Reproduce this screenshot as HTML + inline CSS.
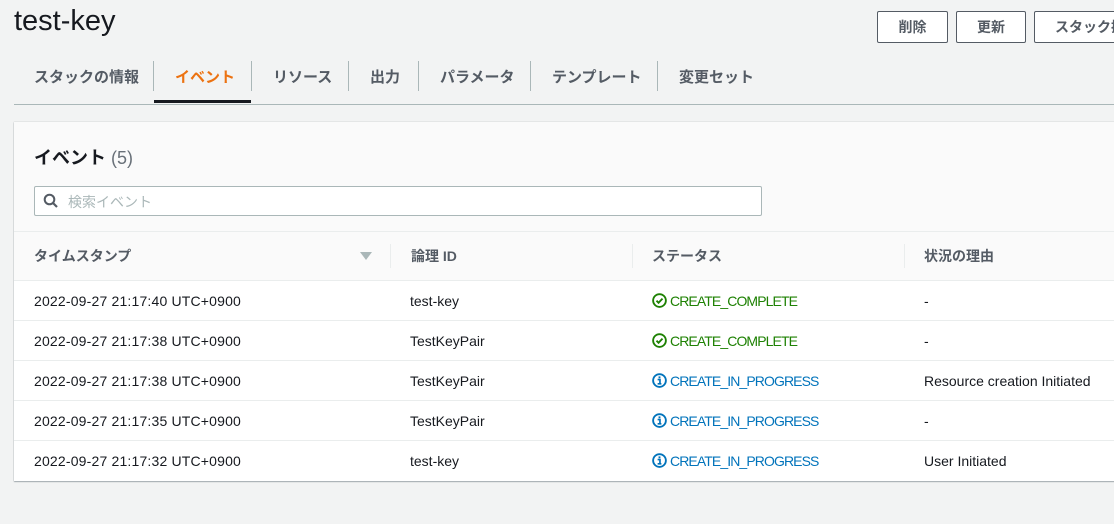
<!DOCTYPE html>
<html><head><meta charset="utf-8"><style>
*{box-sizing:border-box;margin:0;padding:0}
body{width:1114px;height:524px;overflow:hidden;background:#f2f3f3;font-family:"Liberation Sans","Noto Sans CJK JP",sans-serif;color:#16191f;position:relative}
.a{position:absolute;white-space:nowrap}
h1{position:absolute;left:14px;top:5px;font-size:29px;font-weight:normal;color:#16191f}
.btn{position:absolute;top:11px;height:32px;border:1px solid #545b64;border-radius:2px;background:#fff;font-size:14px;font-weight:bold;color:#545b64;line-height:30px;text-align:center;white-space:nowrap;overflow:hidden}
.tab{position:absolute;top:66px;font-size:15px;font-weight:bold;color:#545b64;white-space:nowrap}
.sep{position:absolute;top:61px;width:1px;height:30px;background:#aab7b8}
.panel{position:absolute;left:14px;top:122px;width:1110px;height:359px;background:#fff;box-shadow:0 1px 1px rgba(0,28,36,.3),0 0 1px rgba(0,28,36,.3)}
.row{position:absolute;left:0;width:1110px;height:40px;border-top:1px solid #eaeded;font-size:14px}
.row span{position:absolute;top:12px;white-space:nowrap}
.row span.t{letter-spacing:0.18px}
.st{color:#0073bb;letter-spacing:-0.9px}.ok{color:#1d8102;letter-spacing:-0.9px}
.st svg,.ok svg{margin-right:3px}
</style></head><body>
<h1>test-key</h1>
<div class="btn" style="left:877px;width:71px">削除</div>
<div class="btn" style="left:956px;width:70px">更新</div>
<div class="btn" style="left:1034px;width:100px;text-align:left;padding-left:20px">スタック操作</div>
<div class="tab" style="left:34px">スタックの情報</div>
<div class="sep" style="left:153px"></div>
<div class="tab" style="left:175px;color:#ec7211">イベント</div>
<div class="a" style="left:154px;top:100px;width:97px;height:3px;background:#16191f"></div>
<div class="sep" style="left:251px"></div>
<div class="tab" style="left:273px">リソース</div>
<div class="sep" style="left:348px"></div>
<div class="tab" style="left:370px">出力</div>
<div class="sep" style="left:418px"></div>
<div class="tab" style="left:440px">パラメータ</div>
<div class="sep" style="left:530px"></div>
<div class="tab" style="left:552px">テンプレート</div>
<div class="sep" style="left:657px"></div>
<div class="tab" style="left:679px">変更セット</div>
<div class="a" style="left:14px;top:104px;width:1100px;height:1px;background:#aab7b8"></div>
<div class="panel">
 <div class="a" style="left:0;top:0;width:1110px;height:158px;background:#fafafa"></div>
 <div class="a" style="left:20px;top:22px;font-size:18px;font-weight:bold">イベント <span style="font-weight:normal;color:#687078">(5)</span></div>
 <div class="a" style="left:20px;top:64px;width:728px;height:30px;border:1px solid #aab7b8;border-radius:2px;background:#fff"></div>
 <svg class="a" style="left:29px;top:71px" width="16" height="16" viewBox="0 0 16 16"><circle cx="6.5" cy="6.5" r="4.8" fill="none" stroke="#545b64" stroke-width="2"/><path d="M10 10l4 4" stroke="#545b64" stroke-width="2.2"/></svg>
 <div class="a" style="left:54px;top:70px;font-size:14px;color:#aab7b8">検索イベント</div>
 <div class="a" style="left:0;top:109px;width:1110px;height:1px;background:#eaeded"></div>
 <div class="a" style="left:20px;top:124px;font-size:14px;font-weight:bold;color:#545b64">タイムスタンプ</div>
 <svg class="a" style="left:346px;top:130px" width="12" height="9"><path d="M0 0h12L6 8z" fill="#aab7b8"/></svg>
 <div class="a" style="left:376px;top:122px;width:1px;height:24px;background:#eaeded"></div>
 <div class="a" style="left:397px;top:124px;font-size:14px;font-weight:bold;color:#545b64">論理 ID</div>
 <div class="a" style="left:618px;top:122px;width:1px;height:24px;background:#eaeded"></div>
 <div class="a" style="left:638px;top:124px;font-size:14px;font-weight:bold;color:#545b64">ステータス</div>
 <div class="a" style="left:890px;top:122px;width:1px;height:24px;background:#eaeded"></div>
 <div class="a" style="left:910px;top:124px;font-size:14px;font-weight:bold;color:#545b64">状況の理由</div>

 <div class="row" style="top:158px;border-color:#eaeded"><span class="t" style="left:20px">2022-09-27 21:17:40 UTC+0900</span><span style="left:396px">test-key</span><span class="ok" style="left:638px"><svg width="15" height="15" style="vertical-align:-2px" viewBox="0 0 16 16"><circle cx="8" cy="8" r="6.8" fill="none" stroke="#1d8102" stroke-width="2"/><path d="M4.8 8.2l2.2 2.2 4.2-4.4" fill="none" stroke="#1d8102" stroke-width="2"/></svg>CREATE_COMPLETE</span><span style="left:910px">-</span></div>
 <div class="row" style="top:198px"><span class="t" style="left:20px">2022-09-27 21:17:38 UTC+0900</span><span style="left:396px">TestKeyPair</span><span class="ok" style="left:638px"><svg width="15" height="15" style="vertical-align:-2px" viewBox="0 0 16 16"><circle cx="8" cy="8" r="6.8" fill="none" stroke="#1d8102" stroke-width="2"/><path d="M4.8 8.2l2.2 2.2 4.2-4.4" fill="none" stroke="#1d8102" stroke-width="2"/></svg>CREATE_COMPLETE</span><span style="left:910px">-</span></div>
 <div class="row" style="top:238px"><span class="t" style="left:20px">2022-09-27 21:17:38 UTC+0900</span><span style="left:396px">TestKeyPair</span><span class="st" style="left:638px"><svg width="15" height="15" style="vertical-align:-2px" viewBox="0 0 16 16"><circle cx="8" cy="8" r="6.8" fill="none" stroke="#0073bb" stroke-width="2"/><rect x="7" y="3.6" width="2" height="2" fill="#0073bb"/><path d="M6 7h2.5v4M6 11.5h4" fill="none" stroke="#0073bb" stroke-width="1.8"/></svg>CREATE_IN_PROGRESS</span><span style="left:910px">Resource creation Initiated</span></div>
 <div class="row" style="top:278px"><span class="t" style="left:20px">2022-09-27 21:17:35 UTC+0900</span><span style="left:396px">TestKeyPair</span><span class="st" style="left:638px"><svg width="15" height="15" style="vertical-align:-2px" viewBox="0 0 16 16"><circle cx="8" cy="8" r="6.8" fill="none" stroke="#0073bb" stroke-width="2"/><rect x="7" y="3.6" width="2" height="2" fill="#0073bb"/><path d="M6 7h2.5v4M6 11.5h4" fill="none" stroke="#0073bb" stroke-width="1.8"/></svg>CREATE_IN_PROGRESS</span><span style="left:910px">-</span></div>
 <div class="row" style="top:318px"><span class="t" style="left:20px">2022-09-27 21:17:32 UTC+0900</span><span style="left:396px">test-key</span><span class="st" style="left:638px"><svg width="15" height="15" style="vertical-align:-2px" viewBox="0 0 16 16"><circle cx="8" cy="8" r="6.8" fill="none" stroke="#0073bb" stroke-width="2"/><rect x="7" y="3.6" width="2" height="2" fill="#0073bb"/><path d="M6 7h2.5v4M6 11.5h4" fill="none" stroke="#0073bb" stroke-width="1.8"/></svg>CREATE_IN_PROGRESS</span><span style="left:910px">User Initiated</span></div>
</div>
</body></html>
